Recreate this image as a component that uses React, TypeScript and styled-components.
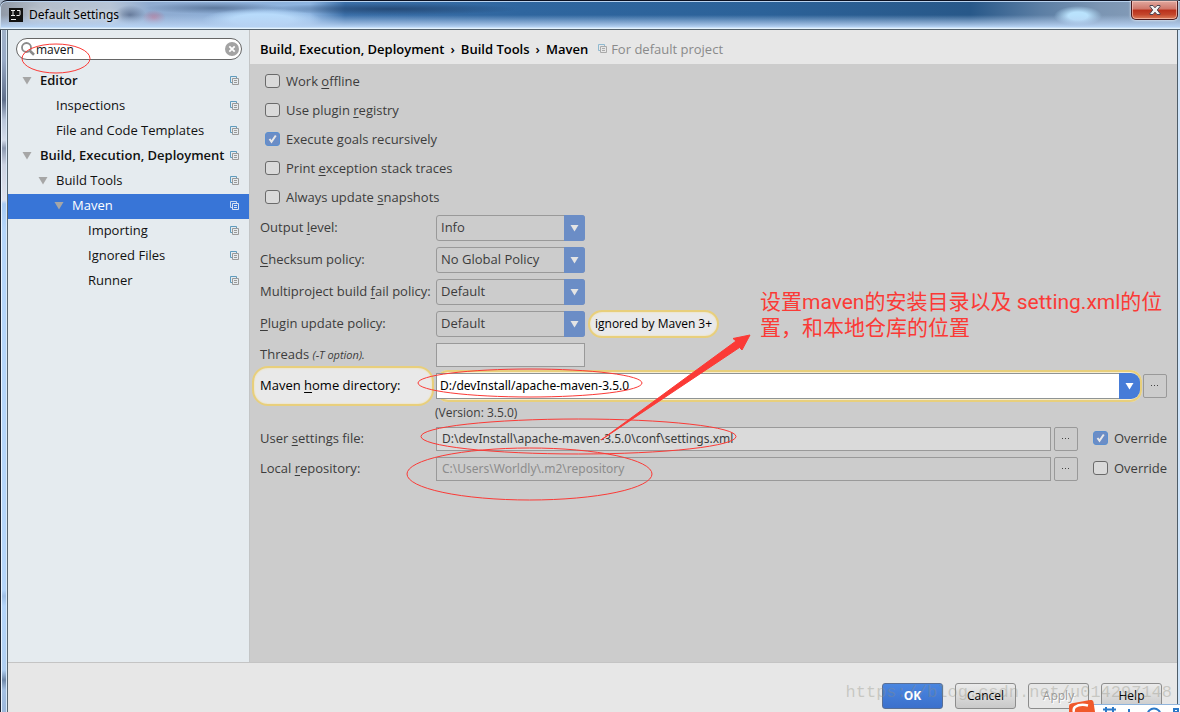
import React, { useState } from 'react';
import styled, { createGlobalStyle, css } from 'styled-components';

const uiFont = '"Open Sans", "Noto Sans", sans-serif';
const red = '#fb3a36';

const GlobalStyle = createGlobalStyle`
  *, *::before, *::after { box-sizing: border-box; }
  body { margin: 0; background: #e7e7e7; font-family: ${uiFont}; font-size: 13px; line-height: 18px; color: #111; }
  button, input, select { font: inherit; color: inherit; margin: 0; }
  svg { flex: none; }
  u { text-underline-offset: 2px; }
`;

const Window = styled.div`
  position: relative;
  display: flex;
  flex-direction: column;
  min-height: 100vh;
  overflow: hidden;
  padding: 0 3px 0 8px;
  background:
    linear-gradient(90deg, #1c2230 0 1px, #e9f4ff 1px 2px, transparent 2px 6px, #d9e8f6 6px 7px, #56646f 7px 8px, transparent 8px) 0 29px no-repeat,
    linear-gradient(270deg, #cfe5fb 0 2px, #4f5d68 2px 3px, transparent 3px) 0 29px no-repeat,
    linear-gradient(180deg, #a9b8cb 0, #98aac6 60px, #5f6f8b 100px, #b9c6da 120px, #d4dcea 140px, #8c99b0 148px, #ccd3e2 165px, #dfe2ec 200px, #a9cbf3 204px, #b4d5fa 230px, #b4d5fa 590px, #9fbfe6 596px, #b4d5fa 606px, #b0cff2 670px, #6f88a9 680px, #a4c0e2 690px, #9cb8db 100%);
`;

const TitleBar = styled.header`
  position: relative;
  display: flex;
  align-items: center;
  height: 30px;
  flex: none;
  margin: 0 -3px 0 -8px;
  padding-left: 9px;
  gap: 6px;
  border-top: 1px solid #0b1020;
  border-radius: 7px 0 0 0;
  border-bottom: 1px solid #56646f;
  box-shadow: inset 0 1px 0 #b9d2ee, inset 1px 0 0 #cfe0f2;
  background:
    linear-gradient(180deg, transparent 0 50%, rgba(182, 208, 240, 0.75) 82%, #b5d2f3 93%, #e3f2fd 97%),
    radial-gradient(ellipse 24px 10px at 1078px 15px, #b9e2fc 0 40%, transparent 100%),
    radial-gradient(ellipse 60px 12px at 262px 19px, #b8dbfb 0 50%, transparent 100%),
    radial-gradient(ellipse 12px 8px at 154px 17px, rgba(190, 110, 140, 0.7), transparent 100%),
    radial-gradient(ellipse 16px 10px at 130px 14px, rgba(70, 90, 125, 0.65), transparent 100%),
    radial-gradient(ellipse 70px 6px at 215px 7px, rgba(60, 85, 120, 0.6), transparent 100%),
    radial-gradient(ellipse 130px 6px at 390px 8px, rgba(30, 60, 100, 0.7), transparent 100%),
    linear-gradient(90deg, #8f98a6 0, #b3bdca 40px, #b7c5d6 110px, #8fabd0 150px, #8db4e0 310px, #3b6fa8 345px, #2f669f 520px, #2c6299 760px, #285889 970px, #5b7ea4 1040px, #7b95b3 1100px, #8aa0ba 100%);
`;

const AppIcon = styled.svg`
  flex: none;
  width: 14px;
  height: 14px;
`;

const Title = styled.h1`
  margin: 0;
  font-family: "Noto Sans", sans-serif;
  font-size: 12px;
  line-height: 16px;
  font-weight: 400;
  color: #000;
  text-shadow: 0 0 5px rgba(255, 255, 255, 0.8);
`;

const CloseButton = styled.button`
  align-self: flex-start;
  margin-left: auto;
  margin-right: 2px;
  width: 47px;
  height: 19px;
  padding: 0;
  display: grid;
  place-items: center;
  border: 1px solid #4b1a1d;
  border-top: 0;
  border-radius: 0 0 5px 5px;
  box-shadow: inset 0 0 0 1px rgba(255, 210, 200, 0.6), 0 0 2px 1px rgba(255, 255, 255, 0.5);
  background: linear-gradient(180deg, #e0a89f 0, #cf7669 45%, #b9301b 50%, #c4462c 75%, #dc7f5c 100%);
`;

const Body = styled.div`
  display: flex;
  flex: 1;
  min-height: 0;
`;

const Sidebar = styled.aside`
  flex: none;
  width: 242px;
  padding-top: 8px;
  background: #e5ebef;
  border-right: 1px solid #c3c5c6;
`;

const SearchBox = styled.label`
  display: flex;
  align-items: center;
  gap: 1px;
  height: 22px;
  margin: 0 7px 9px 8px;
  padding: 0 2px 0 4px;
  border: 1px solid #666;
  border-radius: 11px;
  background: #fff;
`;

const SearchInput = styled.input`
  flex: 1;
  min-width: 0;
  padding: 1px 0 0;
  border: 0;
  outline: 0;
  background: transparent;
  font-size: 12px;
`;

const PlainButton = styled.button`
  display: flex;
  padding: 0;
  border: 0;
  background: none;
`;

const TreeRow = styled.button<{ $level: number; $bold?: boolean; $selected?: boolean }>`
  display: flex;
  align-items: center;
  gap: 8px;
  width: 100%;
  height: 25px;
  padding: 0 9px 2px ${(p) => 14 + p.$level * 16}px;
  border: 0;
  text-align: left;
  white-space: nowrap;
  background: ${(p) => (p.$selected ? '#3875d7' : 'transparent')};
  color: ${(p) => (p.$selected ? '#fff' : '#111')};
  font-weight: ${(p) => (p.$bold ? 600 : 400)};
`;

const TreeLabel = styled.span`
  flex: 1;
  min-width: 0;
  padding-bottom: 2px;
`;

const Main = styled.main`
  flex: 1;
  min-width: 0;
  background: #ccc;
`;

const Crumbs = styled.div`
  display: flex;
  align-items: center;
  gap: 6px;
  height: 34px;
  padding: 4px 0 0 10px;
  background: #e7e7e7;
  color: #000;
  font-weight: 600;
  white-space: nowrap;
`;

const Scope = styled.span`
  display: flex;
  align-items: center;
  gap: 3px;
  margin-left: 4px;
  font-weight: 400;
  color: #8a8a8a;
`;

const Form = styled.form`
  padding: 2px 10px 0 10px;
  color: #3c3c3c;
`;

const CheckGroup = styled.div`
  padding-bottom: 1px;
`;

const CheckLabel = styled.label<{ $tall?: boolean }>`
  display: flex;
  align-items: center;
  gap: 6px;
  height: ${(p) => (p.$tall ? 29 : 24)}px;
  padding-left: 5px;
  white-space: nowrap;
`;

const CheckBox = styled.input`
  appearance: none;
  flex: none;
  width: 15px;
  height: 14px;
  border: 1px solid #6a6a6a;
  border-radius: 3px;
  background: #dadada;

  &:checked {
    border-color: #5a8fd0;
    background: #6b8dc6 url("data:image/svg+xml,%3Csvg xmlns='http://www.w3.org/2000/svg' viewBox='0 0 13 12'%3E%3Cpath d='M3.5 6l2 2.8L9.8 2.5' fill='none' stroke='%23e8e8e8' stroke-width='2'/%3E%3C/svg%3E") center / 13px 12px no-repeat;
  }
`;

const Field = styled.div<{ $height: number }>`
  display: grid;
  grid-template-columns: 176px minmax(0, 1fr);
  align-items: center;
  height: ${(p) => p.$height}px;
`;

const FieldLabel = styled.label`
  padding-bottom: 2px;
  white-space: nowrap;

  i { font-size: 11px; }
`;

const highlight = css`
  border: 2px solid #e8cf7c;
  background: #e9e9e9;
  box-shadow: inset 0 0 2px #f5dd90;
  color: #000;
`;

const HighlightLabel = styled(FieldLabel)`
  ${highlight}
  justify-self: start;
  display: flex;
  align-items: center;
  width: 182px;
  height: 40px;
  margin: -4px 0 -4px -8px;
  padding-left: 6px;
  border-radius: 16px;
  white-space: pre;
`;

const Hint = styled.span`
  ${highlight}
  display: flex;
  align-items: center;
  height: 28px;
  padding: 0 5px;
  border-radius: 14px;
  font-size: 12px;
  white-space: nowrap;
`;

const Controls = styled.div`
  display: flex;
  align-items: center;
  gap: 3px;
`;

const SelectBox = styled.span`
  display: flex;
  position: relative;
  width: 149px;
  height: 26px;
`;

const Select = styled.select`
  appearance: none;
  width: 100%;
  padding: 0 24px 2px 4px;
  border: 1px solid #999;
  border-radius: 3px;
  background: transparent;
`;

const SelectArrow = styled.span`
  position: absolute;
  inset: 0 0 0 auto;
  width: 21px;
  display: grid;
  place-items: center;
  border-radius: 0 3px 3px 0;
  background: #6b8dc6;
  pointer-events: none;
`;

const TextField = styled.input<{ $short?: boolean }>`
  ${(p) => (p.$short ? 'width: 149px;' : 'flex: 1; min-width: 0;')}
  height: 24px;
  padding: 0 5px 1px;
  border: 1px solid #999;
  border-radius: 0;
  outline: 0;
  background: #dadada;
  font: 12px/18px "Noto Sans", sans-serif;

  &:disabled {
    color: #8c8c8c;
    background: transparent;
  }
`;

const HomeCombo = styled.span`
  flex: 1;
  min-width: 0;
  display: flex;
  height: 32px;
  margin-right: -2px;
  padding: 3px 2px 3px 0;
  border-radius: 12px;
  background: #f6edd0;
  box-shadow: inset 0 0 0 2px #e8cf7c;
`;

const HomeInput = styled.input`
  flex: 1;
  min-width: 0;
  padding: 0 3px 1px;
  border: 1px solid #8f9494;
  border-right: 0;
  outline: 0;
  background: #fff;
  color: #000;
  font: 12px/18px "Noto Sans", sans-serif;
`;

const HomeArrow = styled.button`
  width: 21px;
  padding: 0;
  display: grid;
  place-items: center;
  border: 0;
  border-radius: 0 9px 9px 0;
  background: #467cd8;
`;

const BrowseButton = styled.button`
  flex: none;
  width: 24px;
  height: 24px;
  padding: 0;
  display: grid;
  place-items: center;
  border: 1px solid #999;
  border-radius: 2px;
  background: transparent;
`;

const Override = styled(CheckLabel)`
  width: 86px;
  padding-left: 12px;
  padding-bottom: 2px;
`;

const Version = styled.div`
  padding-left: 175px;
  height: 22px;
  line-height: 22px;
  font-size: 12px;
`;

const Footer = styled.footer`
  display: flex;
  justify-content: flex-end;
  align-items: flex-start;
  gap: 12px;
  flex: none;
  height: 50px;
  padding: 20px 15px 0;
  border-top: 1px solid #c4c4c4;
  background: #e7e7e7;
`;

const DialogButton = styled.button<{ $primary?: boolean }>`
  width: 61px;
  height: 26px;
  padding: 0;
  border: 1px solid ${(p) => (p.$primary ? '#5a6f94' : '#8c8c8c')};
  border-radius: 3px;
  background: ${(p) => (p.$primary ? 'linear-gradient(#4a86e0, #3b70cc)' : 'linear-gradient(#ebebeb, #c9c9c9)')};
  color: ${(p) => (p.$primary ? '#fff' : '#000')};
  font-size: 12px;
  font-weight: ${(p) => (p.$primary ? 700 : 400)};

  &:disabled {
    color: #9a9a9a;
    background: #e7e7e7;
    text-shadow: 1px 1px 0 #fff;
  }
`;

const Marks = styled.svg`
  position: absolute;
  top: 0;
  left: 0;
  pointer-events: none;
`;

const Note = styled.p`
  position: absolute;
  left: 760px;
  top: 289px;
  margin: 0;
  color: ${red};
  font: 21px/26px Roboto, "Noto Sans CJK SC", sans-serif;
  white-space: nowrap;
`;

const Watermark = styled.span`
  position: absolute;
  right: 8px;
  bottom: 9px;
  font: 17px/20px "Liberation Mono", monospace;
  color: rgba(140, 140, 125, 0.35);
  pointer-events: none;
`;

const InputMethodBar = styled.svg`
  position: absolute;
  right: 0;
  bottom: 0;
`;

function ProjectIcon({ front = '#999', back = '#5f9bbd' }: { front?: string; back?: string }) {
  return (
    <svg width="10" height="10" viewBox="0 0 10 10" fill="none" aria-hidden="true">
      <path d="M2 6.500H.5v-6h6V2" stroke={back} />
      <path d="M2.500 2.500h6v6h-6zM4 4.500h3M4 6.500h3" stroke={front} />
    </svg>
  );
}

function Triangle({ color, width = 10 }: { color: string; width?: number }) {
  return (
    <svg width={width} height={width - 1} viewBox="0 0 10 9" aria-hidden="true">
      <path d="M.5 1h9L5 8.500z" fill={color} />
    </svg>
  );
}

function Dots() {
  return (
    <svg width="8" height="2" viewBox="0 0 8 2" aria-hidden="true">
      <path d="M0 0h1v1H0zM3 0h1v1H3zM6 0h1v1H6z" fill="#444" />
    </svg>
  );
}

type Node = { label: string; level: number; open?: boolean; bold?: boolean };

const tree: Node[] = [
  { label: 'Editor', level: 0, open: true, bold: true },
  { label: 'Inspections', level: 1 },
  { label: 'File and Code Templates', level: 1 },
  { label: 'Build, Execution, Deployment', level: 0, open: true, bold: true },
  { label: 'Build Tools', level: 1, open: true },
  { label: 'Maven', level: 2, open: true },
  { label: 'Importing', level: 3 },
  { label: 'Ignored Files', level: 3 },
  { label: 'Runner', level: 3 },
];

const checks = [
  { id: 'offline', text: <>Work <u>o</u>ffline</>, on: false },
  { id: 'registry', text: <>Use plugin <u>r</u>egistry</>, on: false },
  { id: 'recursive', text: <>Execute <u>g</u>oals recursively</>, on: true },
  { id: 'traces', text: <>Print <u>e</u>xception stack traces</>, on: false },
  { id: 'snapshots', text: <>Always update <u>s</u>napshots</>, on: false },
];

const selects = [
  { id: 'output', text: <>Output <u>l</u>evel:</>, options: ['Info', 'Debug', 'Warn'] },
  { id: 'checksum', text: <><u>C</u>hecksum policy:</>, options: ['No Global Policy', 'Fail', 'Warn'] },
  { id: 'failure', text: <>Multiproject build <u>f</u>ail policy:</>, options: ['Default', 'Fail Fast'] },
  { id: 'update', text: <><u>P</u>lugin update policy:</>, options: ['Default', 'Never'], hint: 'ignored by Maven 3+' },
];

export default function App() {
  const [selected, setSelected] = useState('Maven');
  return (
    <Window>
      <GlobalStyle />
      <TitleBar>
        <AppIcon viewBox="0 0 14 14" aria-hidden="true">
          <rect width="14" height="14" fill="#111" />
          <path d="M2 2.500h4M4 2.500v5M2 7.500h4M8 2.500h3v4q0 1-1 1H7.500M2 11.500h5" stroke="#eee" fill="none" />
        </AppIcon>
        <Title>Default Settings</Title>
        <CloseButton type="button" aria-label="Close">
          <svg width="12" height="10" viewBox="0 0 12 10" aria-hidden="true">
            <path d="M1 .5h3l2 2.300 2-2.300h3v1L8.300 5l2.700 3.500v1H8L6 7.200 4 9.500H1v-1L3.700 5 1 1.500z" fill="#f2f2f2" stroke="#4c4450" strokeWidth="1" />
          </svg>
        </CloseButton>
      </TitleBar>
      <Body>
        <Sidebar>
          <SearchBox>
            <svg width="14" height="14" viewBox="0 0 14 14" fill="none" stroke="#8a8a8a" aria-hidden="true">
              <circle cx="5.500" cy="5.500" r="4.500" strokeWidth="1.800" />
              <path d="M8.800 8.800l4.200 4" strokeWidth="2.600" />
            </svg>
            <SearchInput aria-label="Search settings" defaultValue="maven" />
            <PlainButton type="button" aria-label="Clear search">
              <svg width="14" height="14" viewBox="0 0 14 14" aria-hidden="true">
                <circle cx="7" cy="7" r="7" fill="#a3a3a3" />
                <path d="M4.300 4.300l5.400 5.400M9.700 4.300l-5.400 5.400" stroke="#fff" strokeWidth="1.800" />
              </svg>
            </PlainButton>
          </SearchBox>
          <nav>
            {tree.map((n) => (
              <TreeRow key={n.label} type="button" $level={n.level} $bold={n.bold} $selected={n.label === selected} onClick={() => setSelected(n.label)}>
                <Triangle color={n.open ? '#a6a6a6' : 'none'} />
                <TreeLabel>{n.label}</TreeLabel>
                {n.label === selected ? <ProjectIcon front="#d8e2f2" back="#c2d6f2" /> : <ProjectIcon />}
              </TreeRow>
            ))}
          </nav>
        </Sidebar>
        <Main>
          <Crumbs>
            <span>Build, Execution, Deployment</span>
            <span>›</span>
            <span>Build Tools</span>
            <span>›</span>
            <span>Maven</span>
            <Scope>
              <ProjectIcon front="#aaa" back="#8fb9d0" />
              For default project
            </Scope>
          </Crumbs>
          <Form onSubmit={(e) => e.preventDefault()}>
            <CheckGroup>
              {checks.map((c) => (
                <CheckLabel key={c.id} $tall>
                  <CheckBox type="checkbox" defaultChecked={c.on} />
                  <span>{c.text}</span>
                </CheckLabel>
              ))}
            </CheckGroup>
            {selects.map((s) => (
              <Field key={s.id} $height={32}>
                <FieldLabel htmlFor={s.id}>{s.text}</FieldLabel>
                <Controls>
                  <SelectBox>
                    <Select id={s.id}>
                      {s.options.map((o) => <option key={o}>{o}</option>)}
                    </Select>
                    <SelectArrow><Triangle color="#e4e4e4" width={9} /></SelectArrow>
                  </SelectBox>
                  {s.hint && <Hint>{s.hint}</Hint>}
                </Controls>
              </Field>
            ))}
            <Field $height={30}>
              <FieldLabel htmlFor="threads">Threads <i>(-T option).</i></FieldLabel>
              <Controls><TextField id="threads" $short /></Controls>
            </Field>
            <Field $height={32}>
              <HighlightLabel htmlFor="home">Maven <u>h</u>ome directory:</HighlightLabel>
              <Controls>
                <HomeCombo>
                  <HomeInput id="home" defaultValue="D:/devInstall/apache-maven-3.5.0" />
                  <HomeArrow type="button" aria-label="Show recent directories"><Triangle color="#fff" width={9} /></HomeArrow>
                </HomeCombo>
                <BrowseButton type="button" aria-label="Browse for Maven home"><Dots /></BrowseButton>
              </Controls>
            </Field>
            <Version>(Version: 3.5.0)</Version>
            <Field $height={30}>
              <FieldLabel htmlFor="settings">User <u>s</u>ettings file:</FieldLabel>
              <Controls>
                <TextField id="settings" defaultValue="D:\devInstall\apache-maven-3.5.0\conf\settings.xml" />
                <BrowseButton type="button" aria-label="Browse for settings file"><Dots /></BrowseButton>
                <Override><CheckBox type="checkbox" defaultChecked />Override</Override>
              </Controls>
            </Field>
            <Field $height={30}>
              <FieldLabel htmlFor="repository">Local <u>r</u>epository:</FieldLabel>
              <Controls>
                <TextField id="repository" disabled defaultValue="C:\Users\Worldly\.m2\repository" />
                <BrowseButton type="button" aria-label="Browse for repository"><Dots /></BrowseButton>
                <Override><CheckBox type="checkbox" />Override</Override>
              </Controls>
            </Field>
          </Form>
        </Main>
      </Body>
      <Footer>
        <DialogButton type="button" $primary>OK</DialogButton>
        <DialogButton type="button">Cancel</DialogButton>
        <DialogButton type="button" disabled>Apply</DialogButton>
        <DialogButton type="button">Help</DialogButton>
      </Footer>
      <Marks width="760" height="520" viewBox="0 0 760 520" fill="none" stroke={red} aria-hidden="true">
        <ellipse cx="56" cy="58.500" rx="34" ry="14.500" />
        <ellipse cx="530" cy="383" rx="112" ry="14" />
        <ellipse cx="578.500" cy="436.500" rx="157.500" ry="17.500" />
        <ellipse cx="529.500" cy="474" rx="122.500" ry="26" />
        <path d="M601 440L736 341l-3-2.500 17-3.500-8 15-2.500-2.500z" fill={red} />
      </Marks>
      <Note>设置maven的安装目录以及 setting.xml的位<br />置，和本地仓库的位置</Note>
      <Watermark>https://blog.csdn.net/u014297148</Watermark>
      <InputMethodBar width="112" height="12" viewBox="0 0 112 12" aria-hidden="true">
        <path d="M24 12V5h88v7z" fill="#fff" />
        <path d="M24 4.500h88" stroke="#8fb4dc" />
        <path d="M1 12V6q0-2 2-2.500L22 0q3-.5 3.500 2L27 12z" fill="#f0592b" />
        <path d="M20 5.500q-8-2-13 1.500-2 2-1 5" stroke="#fff" strokeWidth="2.500" fill="none" />
        <path d="M35 9.500h13M38 7v5M45 7v5M61 9v3M106 9h4v3h-4z" stroke="#2a78c8" strokeWidth="2" fill="none" />
        <circle cx="86" cy="15" r="6.500" stroke="#2a78c8" strokeWidth="2" fill="none" />
      </InputMethodBar>
    </Window>
  );
}
